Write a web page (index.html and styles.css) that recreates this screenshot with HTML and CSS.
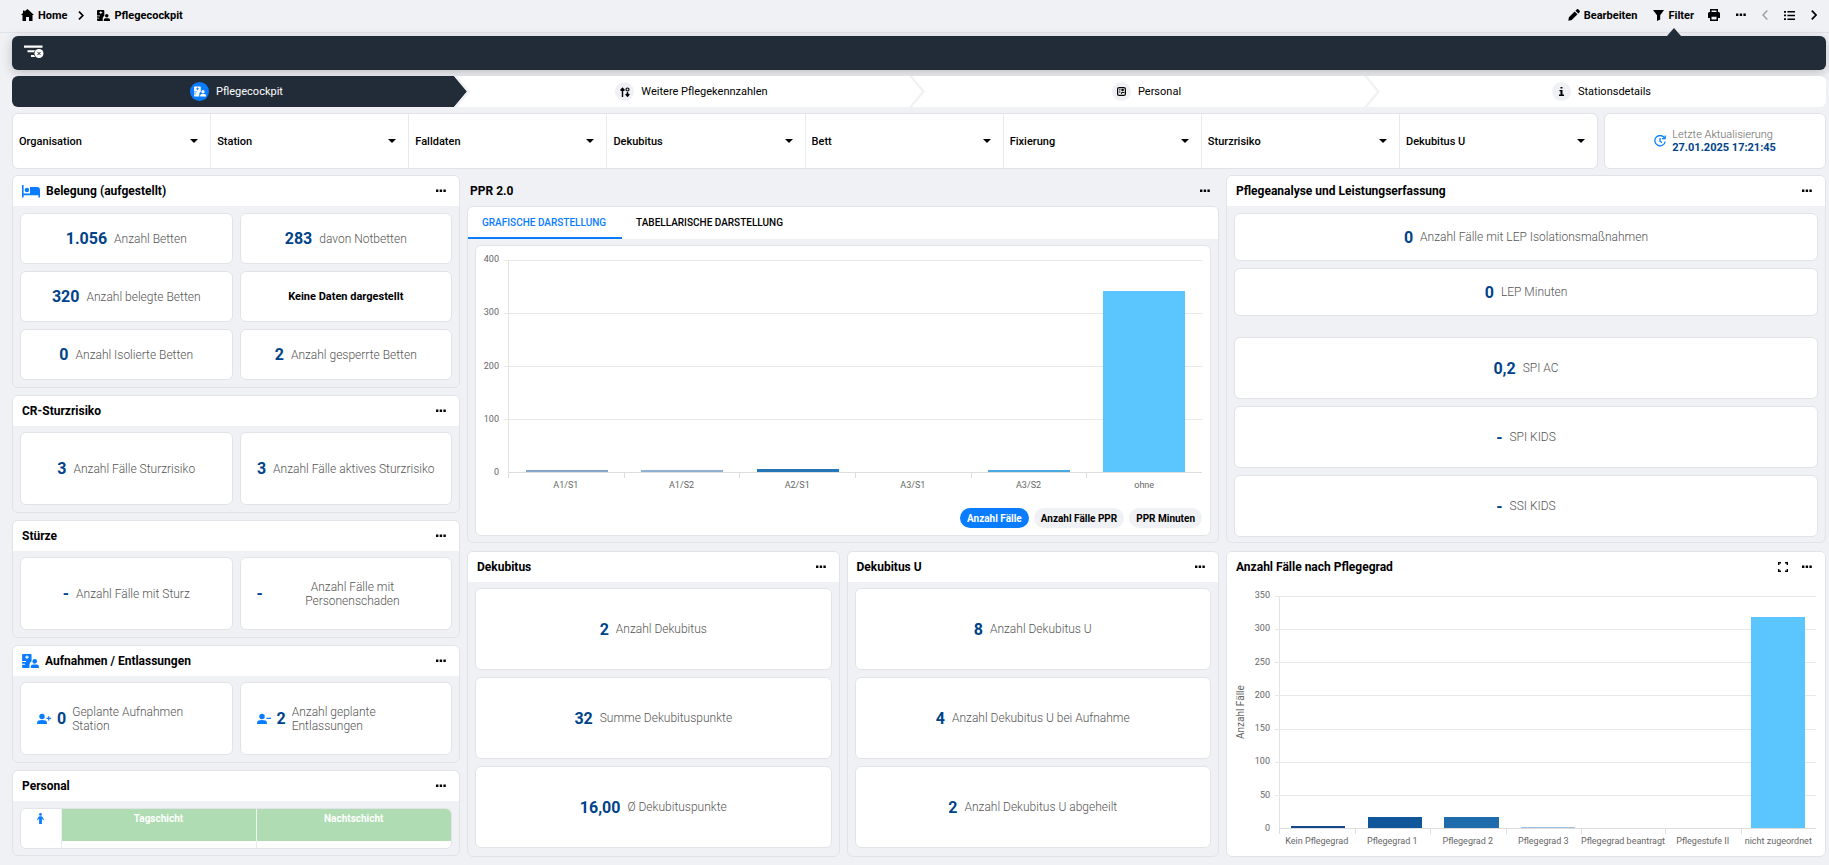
FILE: index.html
```html
<!DOCTYPE html>
<html lang="de">
<head>
  <meta charset="UTF-8" />
  <meta name="viewport" content="width=device-width, initial-scale=1" />
  <title>Pflegecockpit</title>
  <link rel="stylesheet" href="styles.css">
</head>
<body>

  <!-- Icons, die mehrfach vorkommen -->
  <svg class="sprite" aria-hidden="true">
    <symbol id="i-dots" viewBox="0 0 10 4"><path d="M0 .5h2.4v2.6H0zM3.7.5h2.4v2.6H3.7zM7.4.5h2.4v2.6H7.4z"/></symbol>
    <symbol id="i-care" viewBox="0 0 24 20"><path fill-rule="evenodd" d="M1.5 0H12a1.5 1.5 0 0 1 1.5 1.5v9a6 6 0 0 0-3 5V20h-9A1.5 1.5 0 0 1 0 18.500v-17A1.5 1.5 0 0 1 1.5 0zm4.700 2v1.700H4.500v1.600h1.700V7h1.600V5.300h1.700V3.700H7.800V2zM0 10v1.500h5.500V10zm0 4v1.500h4V14z"/><circle cx="18" cy="10.500" r="3.300"/><path d="M12.500 20v-2a3 3 0 0 1 3-3h5.500a3 3 0 0 1 3 3v2z"/></symbol>
    <symbol id="i-user" viewBox="0 0 11 12"><circle cx="5.500" cy="3.200" r="3"/><path d="M0 11.500v-1.500c0-2 2.500-2.800 5.500-2.800s5.500.8 5.500 2.800v1.500z"/></symbol>
  </svg>

  <header class="topbar">
    <nav class="breadcrumb">
      <a href="#"><svg class="icon" width="13" height="12" viewBox="0 0 13 12"><path d="M6.500 0 13 6h-1.500v6H8V8H5v4H1.500V6H0L2 4V1.500h1.500v1z"/></svg>Home</a>
      <svg width="6" height="9" viewBox="0 0 6 9"><path d="M1 .7 4.800 4.500 1 8.300" fill="none" stroke="#000" stroke-width="1.700"/></svg>
      <a href="#" class="current"><svg class="icon" width="13" height="11"><use href="#i-care"/></svg>Pflegecockpit</a>
    </nav>
    <div class="tools">
      <button><svg class="icon" width="12" height="12" viewBox="0 0 12 12"><path d="M.3 11.700.9 8.300 6.700 2.500l2.800 2.800-5.800 5.800zM7.500 1.700 8.600.6a1.400 1.400 0 0 1 2 0l.8.8a1.400 1.400 0 0 1 0 2l-1.100 1.100z"/></svg>Bearbeiten</button>
      <button class="filter-btn"><svg class="icon" width="11" height="11" viewBox="0 0 11 11"><path d="M0 0h11L7.200 5.200V9.500L4 11V5.200z"/></svg>Filter</button>
      <button aria-label="Drucken"><svg width="12" height="12" viewBox="0 0 12 12"><path fill-rule="evenodd" d="M2 0h8v3h.5A1.500 1.500 0 0 1 12 4.500V9h-2v3H2V9H0V4.500A1.500 1.500 0 0 1 1.500 3H2zm1.500 1.400V3h5V1.400zm0 6.300v2.900h5V7.700z"/></svg></button>
      <button aria-label="Mehr"><svg width="10" height="4"><use href="#i-dots"/></svg></button>
      <button aria-label="Zurück" disabled><svg width="6" height="10" viewBox="0 0 6 10"><path d="M5.300.5 1 5l4.300 4.500" fill="none" stroke="#999" stroke-width="1.300"/></svg></button>
      <button aria-label="Liste"><svg width="11" height="9" viewBox="0 0 11 9"><path d="M0 0h2v1.700H0zM0 3.600h2v1.700H0zM0 7.200h2v1.700H0zM3.400 0H11v1.500H3.400zM3.400 3.700H11v1.500H3.400zM3.400 7.400H11v1.500H3.400z"/></svg></button>
      <button aria-label="Weiter"><svg width="6" height="10" viewBox="0 0 6 10"><path d="M.8.700 5 5 .8 9.300" fill="none" stroke="#000" stroke-width="1.700"/></svg></button>
    </div>
  </header>

  <main class="page">
    <div class="filterbar">
      <button aria-label="Filter zurücksetzen">
        <svg width="20" height="14" viewBox="0 0 20 14"><path d="M0 .5h18.500v2.300H0zM3.500 5.300h10v2H3.500zM7 10h5v2H7z" fill="#fff"/><circle cx="15" cy="8.500" r="5.200" fill="#222c38"/><circle cx="15" cy="8.500" r="4.500" fill="#fff"/><path d="m13.400 6.900 3.200 3.200m0-3.200-3.200 3.200" stroke="#222c38" stroke-width="1"/></svg>
      </button>
    </div>

    <ol class="steps">
      <li class="step active">
        <a href="#"><span class="step-icon"><svg width="12" height="11"><use href="#i-care"/></svg></span>Pflegecockpit</a>
        <svg class="chevron" width="16" height="31" viewBox="0 0 16 31"><path fill="#fff" d="M0 0h16v31H0z"/><path fill="#222c38" d="M0 0l13 15.500L0 31z"/><path fill="#f0f1f5" d="M0 0h3l13 15.500L3 31H0l13-15.500z"/></svg>
      </li>
      <li class="step">
        <a href="#"><span class="step-icon"><svg width="10" height="10" viewBox="0 0 10 10"><path d="M2.500 10V1.500M.5 3.500 2.500 1.200l2 2.300M7.500 5v4M5.700 7 7.500 9.200 9.300 7" fill="none" stroke="#000" stroke-width="1.400"/><circle cx="7.500" cy="2.500" r="1.500" fill="none" stroke="#000" stroke-width="1.200"/></svg></span>Weitere Pflegekennzahlen</a>
        <svg class="chevron" width="16" height="31" viewBox="0 0 16 31"><path fill="#f0f1f5" d="M0 0h3l13 15.500L3 31H0l13-15.500z"/></svg>
      </li>
      <li class="step">
        <a href="#"><span class="step-icon"><svg width="9" height="9" viewBox="0 0 9 9"><rect x=".6" y=".6" width="7.800" height="7.800" rx="1.500" fill="none" stroke="#000" stroke-width="1.200"/><path d="M2 2.800h1.500M2 5h1.500M4.500 6.900V5.500h3" stroke="#000" fill="none"/><circle cx="5.600" cy="3" r="1.300"/></svg></span>Personal</a>
        <svg class="chevron" width="16" height="31" viewBox="0 0 16 31"><path fill="#f0f1f5" d="M0 0h3l13 15.500L3 31H0l13-15.500z"/></svg>
      </li>
      <li class="step">
        <a href="#"><span class="step-icon"><svg width="5" height="9" viewBox="0 0 5 9"><path d="M1.500 0h2v1.600h-2zM.5 3h3v4.600H5V9H0V7.600h1.500V4.300H.5z"/></svg></span>Stationsdetails</a>
      </li>
    </ol>

    <div class="filter-row">
      <form class="filters">
        <div class="filter"><select aria-label="Organisation"><option>Organisation</option></select></div>
        <div class="filter"><select aria-label="Station"><option>Station</option></select></div>
        <div class="filter"><select aria-label="Falldaten"><option>Falldaten</option></select></div>
        <div class="filter"><select aria-label="Dekubitus"><option>Dekubitus</option></select></div>
        <div class="filter"><select aria-label="Bett"><option>Bett</option></select></div>
        <div class="filter"><select aria-label="Fixierung"><option>Fixierung</option></select></div>
        <div class="filter"><select aria-label="Sturzrisiko"><option>Sturzrisiko</option></select></div>
        <div class="filter"><select aria-label="Dekubitus U"><option>Dekubitus U</option></select></div>
      </form>
      <div class="updated">
        <svg width="12" height="12" viewBox="0 0 12 12"><path d="M10.300 2.700A5.200 5.200 0 1 0 11.200 6.500M11.200.5v3.200H8M6 3v3.300l2 1.200" fill="none" stroke="#0a7cff" stroke-width="1.300"/></svg>
        <div>
          <div class="updated-label">Letzte Aktualisierung</div>
          <div class="updated-time">27.01.2025 17:21:45</div>
        </div>
      </div>
    </div>

    <div class="dashboard">

      <div class="col-left">
        <section class="panel">
          <div class="panel-head">
            <svg class="head-icon" width="18" height="13" viewBox="0 0 18 13"><path d="M0 0h1.600v8.500H8V2h7a3 3 0 0 1 3 3v7.500h-1.600v-2.200H1.600v2.200H0z"/><circle cx="4.900" cy="5" r="2.200"/></svg>
            <h2>Belegung (aufgestellt)</h2>
            <button class="more" aria-label="Mehr"><svg width="10" height="4"><use href="#i-dots"/></svg></button>
          </div>
          <div class="tiles two small">
            <div class="tile"><b>1.056</b><span>Anzahl Betten</span></div>
            <div class="tile"><b>283</b><span>davon Notbetten</span></div>
            <div class="tile"><b>320</b><span>Anzahl belegte Betten</span></div>
            <div class="tile"><strong>Keine Daten dargestellt</strong></div>
            <div class="tile"><b>0</b><span>Anzahl Isolierte Betten</span></div>
            <div class="tile"><b>2</b><span>Anzahl gesperrte Betten</span></div>
          </div>
        </section>

        <section class="panel">
          <div class="panel-head">
            <h2>CR-Sturzrisiko</h2>
            <button class="more" aria-label="Mehr"><svg width="10" height="4"><use href="#i-dots"/></svg></button>
          </div>
          <div class="tiles two">
            <div class="tile"><b>3</b><span>Anzahl Fälle Sturzrisiko</span></div>
            <div class="tile"><b>3</b><span>Anzahl Fälle aktives Sturzrisiko</span></div>
          </div>
        </section>

        <section class="panel">
          <div class="panel-head">
            <h2>Stürze</h2>
            <button class="more" aria-label="Mehr"><svg width="10" height="4"><use href="#i-dots"/></svg></button>
          </div>
          <div class="tiles two">
            <div class="tile"><b>-</b><span>Anzahl Fälle mit Sturz</span></div>
            <div class="tile"><b>-</b><span class="grow">Anzahl Fälle mit<br>Personenschaden</span></div>
          </div>
        </section>

        <section class="panel">
          <div class="panel-head">
            <svg class="head-icon" width="17" height="14"><use href="#i-care"/></svg>
            <h2>Aufnahmen / Entlassungen</h2>
            <button class="more" aria-label="Mehr"><svg width="10" height="4"><use href="#i-dots"/></svg></button>
          </div>
          <div class="tiles two">
            <div class="tile left"><svg width="14" height="12" viewBox="0 0 14 12"><use href="#i-user" width="10" height="12"/><path d="M9.500 4.800H14v1.200H9.500zM11.100 3.200h1.200v4.400h-1.200z"/></svg><b>0</b><span>Geplante Aufnahmen<br>Station</span></div>
            <div class="tile left"><svg width="14" height="12" viewBox="0 0 14 12"><use href="#i-user" width="10" height="12"/><path d="M9.500 4.800H14v1.200H9.500z"/></svg><b>2</b><span>Anzahl geplante<br>Entlassungen</span></div>
          </div>
        </section>

        <section class="panel">
          <div class="panel-head">
            <h2>Personal</h2>
            <button class="more" aria-label="Mehr"><svg width="10" height="4"><use href="#i-dots"/></svg></button>
          </div>
          <div class="shift-box">
            <table class="shifts">
              <tr>
                <td class="person"><svg width="7" height="11" viewBox="0 0 7 11"><circle cx="3.500" cy="1.400" r="1.400"/><path d="M2 3.200h3L7 6.800l-1 .5-1.100-2V11H2.100V5.300L1 7.300l-1-.5z"/></svg></td>
                <th>Tagschicht</th>
                <th>Nachtschicht</th>
              </tr>
              <tr class="empty"><td></td><td></td><td></td></tr>
            </table>
          </div>
        </section>
      </div>

      <div class="col-main">
        <div class="ppr">
          <div class="ppr-head">
            <h2>PPR 2.0</h2>
            <button class="more" aria-label="Mehr"><svg width="10" height="4"><use href="#i-dots"/></svg></button>
          </div>
          <section class="panel">
            <div class="tabs">
              <button class="tab active">GRAFISCHE DARSTELLUNG</button>
              <button class="tab">TABELLARISCHE DARSTELLUNG</button>
            </div>
            <div class="chart-card">
              <div class="chart">
                <div class="y-labels"><span>400</span><span>300</span><span>200</span><span>100</span><span>0</span></div>
                <div class="plot">
                  <div class="grid-lines"><i></i><i></i><i></i><i></i></div>
                  <div class="bars">
                    <div><i style="height: 0.900%; background: #87a5ca"></i></div>
                    <div><i style="height: 0.900%; background: #8fb0d3"></i></div>
                    <div><i style="height: 1.300%; background: #2476b8"></i></div>
                    <div></div>
                    <div><i style="height: 0.900%; background: #4aa9e0"></i></div>
                    <div><i style="height: 85.500%; background: #5bc6fd"></i></div>
                  </div>
                </div>
                <div class="x-labels"><span>A1/S1</span><span>A1/S2</span><span>A2/S1</span><span>A3/S1</span><span>A3/S2</span><span>ohne</span></div>
              </div>
              <div class="pills">
                <button class="pill active">Anzahl Fälle</button>
                <button class="pill">Anzahl Fälle PPR</button>
                <button class="pill">PPR Minuten</button>
              </div>
            </div>
          </section>
        </div>

        <div class="pair">
          <section class="panel">
            <div class="panel-head">
              <h2>Dekubitus</h2>
              <button class="more" aria-label="Mehr"><svg width="10" height="4"><use href="#i-dots"/></svg></button>
            </div>
            <div class="tiles big">
              <div class="tile"><b>2</b><span>Anzahl Dekubitus</span></div>
              <div class="tile"><b>32</b><span>Summe Dekubituspunkte</span></div>
              <div class="tile"><b>16,00</b><span>Ø Dekubituspunkte</span></div>
            </div>
          </section>
          <section class="panel">
            <div class="panel-head">
              <h2>Dekubitus U</h2>
              <button class="more" aria-label="Mehr"><svg width="10" height="4"><use href="#i-dots"/></svg></button>
            </div>
            <div class="tiles big">
              <div class="tile"><b>8</b><span>Anzahl Dekubitus U</span></div>
              <div class="tile"><b>4</b><span>Anzahl Dekubitus U bei Aufnahme</span></div>
              <div class="tile"><b>2</b><span>Anzahl Dekubitus U abgeheilt</span></div>
            </div>
          </section>
        </div>
      </div>

      <div class="col-right">
        <section class="panel">
          <div class="panel-head">
            <h2>Pflegeanalyse und Leistungserfassung</h2>
            <button class="more" aria-label="Mehr"><svg width="10" height="4"><use href="#i-dots"/></svg></button>
          </div>
          <div class="tiles lep">
            <div class="tile"><b>0</b><span>Anzahl Fälle mit LEP Isolationsmaßnahmen</span></div>
            <div class="tile"><b>0</b><span>LEP Minuten</span></div>
          </div>
          <div class="tiles spi">
            <div class="tile"><b>0,2</b><span>SPI AC</span></div>
            <div class="tile"><b>-</b><span>SPI KIDS</span></div>
            <div class="tile"><b>-</b><span>SSI KIDS</span></div>
          </div>
        </section>

        <section class="panel white">
          <div class="panel-head">
            <h2>Anzahl Fälle nach Pflegegrad</h2>
            <button class="more" aria-label="Vollbild"><svg width="10" height="10" viewBox="0 0 10 10"><path d="M.700 3V.700H3M7 .700h2.300V3M9.300 7v2.300H7M3 9.300H.700V7" fill="none" stroke="#000" stroke-width="1.400"/></svg></button>
            <button class="more" aria-label="Mehr"><svg width="10" height="4"><use href="#i-dots"/></svg></button>
          </div>
          <div class="chart-wrap">
            <div class="y-title">Anzahl Fälle</div>
            <div class="chart tall">
              <div class="y-labels"><span>350</span><span>300</span><span>250</span><span>200</span><span>150</span><span>100</span><span>50</span><span>0</span></div>
              <div class="plot">
                <div class="grid-lines"><i></i><i></i><i></i><i></i><i></i><i></i><i></i></div>
                <div class="bars">
                  <div><i style="height: 0.900%; background: #17498a"></i></div>
                  <div><i style="height: 4.700%; background: #10569b"></i></div>
                  <div><i style="height: 4.700%; background: #1f6cac"></i></div>
                  <div><i style="height: 0.500%; background: #9cc0df"></i></div>
                  <div></div>
                  <div></div>
                  <div><i style="height: 91%; background: #5bc6fd"></i></div>
                </div>
              </div>
              <div class="x-labels"><span>Kein Pflegegrad</span><span>Pflegegrad 1</span><span>Pflegegrad 2</span><span>Pflegegrad 3</span><span>Pflegegrad beantragt</span><span>Pflegestufe II</span><span>nicht zugeordnet</span></div>
            </div>
          </div>
        </section>
      </div>

    </div>
  </main>

</body>
</html>
```

FILE: styles.css
```css
* {
  box-sizing: border-box;
}

body {
  margin: 0;
  background: #f0f1f5;
  font-family: Roboto, "Liberation Sans", sans-serif;
  font-size: 11px;
  color: #000;
}

button {
  display: flex;
  align-items: center;
  padding: 0;
  border: 0;
  background: none;
  font: inherit;
  color: inherit;
  cursor: pointer;
}

a {
  color: inherit;
  text-decoration: none;
}

svg {
  display: block;
  flex: none;
}

h2 {
  margin: 0;
  font-size: 12px;
  font-weight: 700;
}

.sprite {
  position: absolute;
  width: 0;
  height: 0;
}

/* Kopfzeile */
.topbar {
  display: flex;
  justify-content: space-between;
  align-items: center;
  height: 33px;
  padding: 0 12px 2px 21px;
  border-bottom: 1px solid #e2e3e8;
  font-weight: 700;
}

.breadcrumb,
.breadcrumb a,
.tools {
  display: flex;
  align-items: center;
}

.breadcrumb {
  gap: 11px;
}

.breadcrumb .current {
  margin-left: 2px;
}

.icon {
  margin-right: 4px;
}

.tools {
  gap: 16px;
}

.filter-btn {
  position: relative;
}

.filter-btn + button {
  margin-left: -2px;
}

.filter-btn::after {
  content: "";
  position: absolute;
  left: 50%;
  top: 19px;
  margin-left: -7px;
  border: 7px solid transparent;
  border-top: 0;
  border-bottom: 8px solid #222c38;
}

.page {
  padding: 3px 3px 8px 12px;
}

.filterbar {
  height: 34px;
  padding: 9px 12px;
  border-radius: 6px;
  background: #222c38;
  box-shadow: 0 3px 12px rgba(0, 0, 0, 0.2);
}

/* Schritte */
.steps {
  position: relative;
  display: grid;
  grid-template-columns: repeat(4, 1fr);
  gap: 6px;
  margin: 6px 0;
  padding: 0;
  list-style: none;
  background: #fff;
  border-radius: 6px;
  overflow: hidden;
}

.step {
  position: relative;
  height: 31px;
}

.step a {
  display: flex;
  align-items: center;
  justify-content: center;
  gap: 7px;
  height: 100%;
}

.step.active {
  background: #222c38;
  color: #fff;
}

.step-icon {
  display: flex;
  align-items: center;
  justify-content: center;
  width: 19px;
  height: 19px;
  border-radius: 50%;
  background: #f0f1f5;
}

.active .step-icon {
  background: #0a7cff;
  fill: #fff;
}

.chevron {
  position: absolute;
  top: 0;
  right: -9px;
}

/* Filter */
.filter-row {
  display: grid;
  grid-template-columns: 1587fr 222fr;
  gap: 6px;
  height: 56px;
  margin-bottom: 6px;
}

.filters,
.updated {
  display: flex;
  background: #fff;
  border: 1px solid #e2e3e8;
  border-radius: 6px;
}

.filter {
  display: grid;
  flex: 1;
  align-items: center;
  border-left: 1px solid #e8e9ee;
}

.filter:first-child {
  border-left: 0;
}

.filter select {
  grid-area: 1 / 1;
  height: 100%;
  padding: 0 24px 0 6px;
  border: 0;
  background: none;
  appearance: none;
  font: 500 11px Roboto, "Liberation Sans", sans-serif;
  color: #000;
}

.filter::after {
  content: "";
  grid-area: 1 / 1;
  justify-self: end;
  margin-right: 12px;
  border: 4px solid transparent;
  border-top-color: #000;
  border-bottom: 0;
  pointer-events: none;
}

.updated {
  align-items: center;
  justify-content: center;
  gap: 6px;
  line-height: 13px;
}

.updated-label {
  font-weight: 300;
  color: #666;
}

.updated-time {
  font-weight: 700;
  color: #00438a;
}

/* Kacheln */
.dashboard {
  display: grid;
  grid-template-columns: 448fr 752fr 600fr;
  gap: 7px;
}

.col-left {
  display: flex;
  flex-direction: column;
  gap: 7px;
}

.col-main,
.col-right {
  display: grid;
  grid-template-rows: 368px 306px;
  gap: 8px;
}

.panel {
  border: 1px solid #e2e3e8;
  border-radius: 6px;
  overflow: hidden;
}

.panel.white {
  background: #fff;
}

.panel-head {
  display: flex;
  align-items: center;
  gap: 14px;
  height: 30px;
  padding: 0 13px 0 9px;
  background: #fff;
}

.panel-head h2 {
  flex: 1;
}

.head-icon {
  margin-right: -8px;
  fill: #0a7cff;
}

.tiles {
  display: grid;
  gap: 7px;
  padding: 6px 7px 7px;
  grid-auto-rows: 73px;
}

.tiles.two {
  grid-template-columns: 1fr 1fr;
}

.tiles.small {
  grid-auto-rows: 51px;
  padding-top: 7px;
}

.tiles.big {
  grid-auto-rows: 82px;
}

.tiles.lep {
  grid-auto-rows: 48px;
  padding-top: 7px;
}

.tiles.spi {
  grid-auto-rows: 62px;
  padding-top: 14px;
}

.tile {
  display: flex;
  align-items: center;
  justify-content: center;
  gap: 7px;
  padding: 0 16px;
  background: #fff;
  border: 1px solid #e2e3e8;
  border-radius: 6px;
}

.tile b {
  font-size: 16px;
  color: #00438a;
}

.tile span {
  font-size: 12px;
  line-height: 14px;
  font-weight: 300;
  color: #555;
}

.tile .grow {
  flex: 1;
  text-align: center;
}

.tile.left {
  justify-content: flex-start;
  gap: 6px;
}

.tile.left svg {
  fill: #0a7cff;
}

/* Personal */
.shift-box {
  margin: 7px 7px 6px;
  background: #fff;
  border: 1px solid #e2e3e8;
  border-radius: 6px;
  overflow: hidden;
}

.shifts {
  width: 100%;
  border-collapse: collapse;
  table-layout: fixed;
}

.shifts th,
.shifts td {
  height: 32px;
  padding: 4px 0;
  vertical-align: top;
  font-size: 10px;
}

.shifts th {
  background: #afdcb2;
  border-left: 1px solid #f0f1f5;
  color: #fff;
}

.shifts .person {
  width: 40px;
}

.person svg {
  margin: 0 auto;
  fill: #0a7cff;
}

.shifts .empty td {
  height: 7px;
  padding: 0;
}

.shifts .empty td + td {
  border-left: 1px solid #e8e9ee;
}

/* PPR 2.0 */
.ppr-head {
  display: flex;
  align-items: center;
  justify-content: space-between;
  height: 31px;
  padding: 0 9px 0 3px;
}

.tabs {
  display: flex;
  background: #fff;
}

.tab {
  height: 32px;
  padding: 0 16px 0 14px;
  border-bottom: 2px solid transparent;
  font-size: 10px;
  font-weight: 500;
}

.tab.active {
  color: #0a7cff;
  border-color: #0a7cff;
}

.chart-card {
  margin: 6px 7px;
  padding: 14px 8px 7px 0;
  background: #fff;
  border: 1px solid #e2e3e8;
  border-radius: 6px;
}

.chart {
  display: grid;
  grid-template-columns: 32px 1fr;
  grid-template-rows: 213px auto;
  flex: 1;
  font-size: 9px;
  line-height: 12px;
  color: #666;
}

.y-labels {
  display: flex;
  flex-direction: column;
  justify-content: space-between;
  margin: -7px 9px -5px 0;
  text-align: right;
}

.plot {
  display: grid;
  border-left: 1px solid #e3e3e3;
  border-bottom: 1px solid #ddd;
}

.grid-lines,
.bars {
  grid-area: 1 / 1;
  display: flex;
}

.grid-lines {
  flex-direction: column;
  margin-left: -5px;
}

.grid-lines i {
  flex: 1;
  border-top: 1px solid #e8e8e8;
}

.bars div {
  flex: 1;
  display: flex;
  align-items: flex-end;
  justify-content: center;
}

.bars i {
  width: 71%;
  min-height: 1px;
}

.x-labels {
  grid-column: 2;
  display: flex;
}

.x-labels span {
  flex: 1 1 0;
  display: flex;
  justify-content: center;
  padding-top: 6px;
  white-space: nowrap;
  background: linear-gradient(#ddd, #ddd) left top / 1px 5px no-repeat;
}

.pills {
  display: flex;
  justify-content: flex-end;
  gap: 5px;
  margin-top: 17px;
}

.pill {
  height: 20px;
  padding: 0 7px;
  border-radius: 10px;
  background: #f0f1f5;
  font-size: 10px;
  font-weight: 700;
}

.pill.active {
  background: #0a7cff;
  color: #fff;
}

.pair {
  display: grid;
  grid-template-columns: 1fr 1fr;
  gap: 7px;
}

/* Pflegegrad */
.chart-wrap {
  display: flex;
  padding: 14px 9px 0 8px;
}

.y-title {
  width: 12px;
  margin-bottom: 18px;
  writing-mode: vertical-rl;
  transform: rotate(180deg);
  text-align: center;
  font-size: 10px;
  line-height: 12px;
  color: #666;
}

.chart.tall {
  grid-template-rows: 233px auto;
}
```
